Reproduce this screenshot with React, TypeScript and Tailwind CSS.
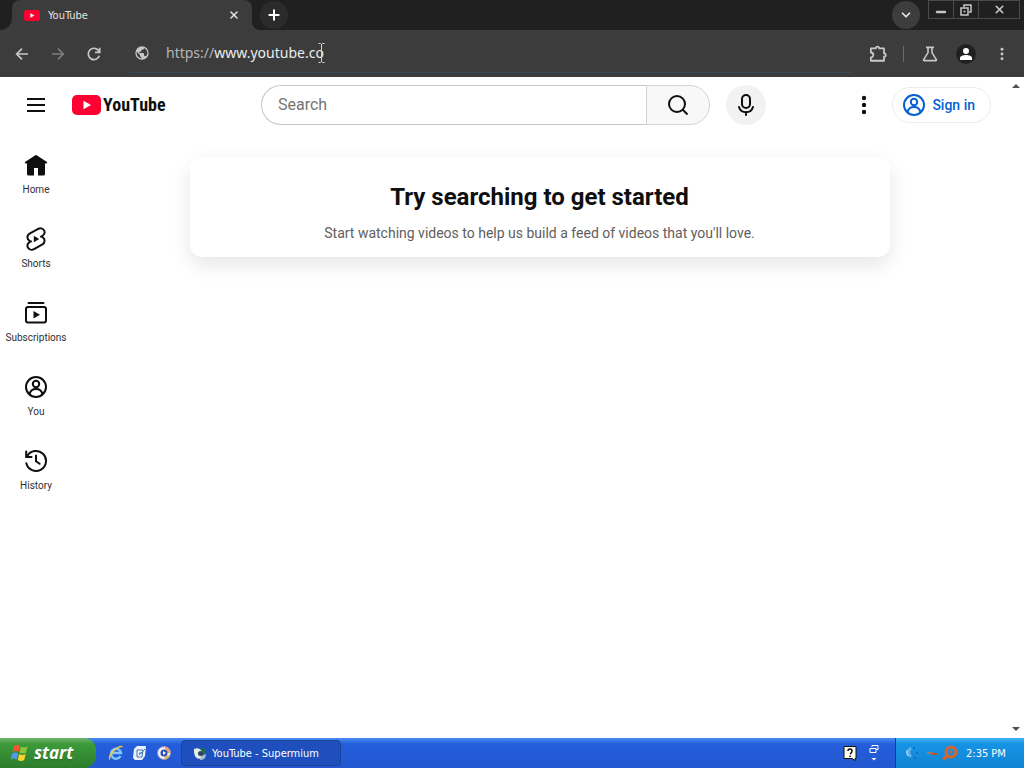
import React, { useState } from 'react'
import { ChevronDown, Minus, Plus, X } from 'lucide-react';

interface IconProps {
  className?: string;
}

interface NavItem {
  label: string;
  icon: (props: IconProps) => React.ReactElement;
}

const HomeIcon = ({ className }: IconProps) => (
  <svg viewBox="0 0 24 24" className={className} fill="currentColor">
    <path d="M11.300 2.200 1.400 8.700a1 1 0 0 0 .5 1.900H3V21a1.500 1.500 0 0 0 1.500 1.500H10V15h4v7.500h5.500A1.500 1.500 0 0 0 21 21V10.600h1.100a1 1 0 0 0 .5-1.900L12.700 2.200a1.300 1.300 0 0 0-1.400 0Z" />
  </svg>
);

const ShortsIcon = ({ className }: IconProps) => (
  <svg viewBox="0 0 24 24" className={className} fill="none" stroke="currentColor" strokeWidth="2" strokeLinejoin="round">
    <path d="M14.200 1.900 6 6.300C2.500 8.200 2.700 12.400 5.600 13.800L7 14.400 6 14.900C3 16.500 2.900 19.300 4.200 21C5.300 22.600 8 23.300 10 22.100L18 17.700C21.500 15.800 21.300 11.600 18.400 10.200L17 9.600 18 9.100C21 7.500 21.100 4.700 19.800 3C18.700 1.400 16.200.800 14.200 1.900Z" />
    <path d="M9.800 8.800v6.400l5.400-3.200Z" fill="currentColor" stroke="none" />
  </svg>
);

const SubscriptionsIcon = ({ className }: IconProps) => (
  <svg viewBox="0 0 24 24" className={className} fill="none" stroke="currentColor" strokeWidth="2">
    <path d="M4.500 2h15" strokeLinecap="round" />
    <rect x="2" y="6" width="20" height="15.500" rx="2" />
    <path d="M9.500 10v7.500l6.500-3.750Z" fill="currentColor" stroke="none" />
  </svg>
);

const AccountIcon = ({ className }: IconProps) => (
  <svg viewBox="0 0 24 24" className={className} fill="none" stroke="currentColor" strokeWidth="2">
    <circle cx="12" cy="12" r="10" />
    <circle cx="12" cy="9" r="3.200" />
    <path d="M5.500 19.200a6.700 6.700 0 0 1 13 0" />
  </svg>
);

const HistoryIcon = ({ className }: IconProps) => (
  <svg viewBox="0 0 24 24" className={className} fill="none" stroke="currentColor" strokeWidth="2" strokeLinecap="round">
    <path d="M2.200 2.500V8H7.500" />
    <path d="M3.200 7.200A10 10 0 1 1 2.300 14.300" />
    <path d="M12 6.500V12.200l3.600 2.600" />
  </svg>
);

const PlayBadge = ({ className }: IconProps) => (
  <svg viewBox="0 0 29 20" className={className}>
    <rect width="29" height="20" rx="5" fill="#ff0033" />
    <path d="M11.500 5.700v8.600L19 10Z" fill="#fff" />
  </svg>
);

const GlobeIcon = ({ className }: IconProps) => (
  <svg viewBox="0 0 24 24" className={className} fill="currentColor">
    <path d="M12 2a10 10 0 1 0 0 20 10 10 0 0 0 0-20Zm-1 17.930C7.050 19.440 4 16.080 4 12c0-.620.080-1.210.210-1.790L9 15v1a2 2 0 0 0 2 2v1.930Zm6.900-2.540A2 2 0 0 0 16 16h-1v-3a1 1 0 0 0-1-1H8v-2h2a1 1 0 0 0 1-1V7h2a2 2 0 0 0 2-2v-.410A8 8 0 0 1 17.900 17.390Z" />
  </svg>
);

const DotsIcon = ({ className }: IconProps) => (
  <svg viewBox="0 0 24 24" className={className} fill="currentColor">
    <circle cx="12" cy="5" r="2.200" />
    <circle cx="12" cy="12" r="2.200" />
    <circle cx="12" cy="19" r="2.200" />
  </svg>
);

const navItems: NavItem[] = [
  { label: 'Home', icon: HomeIcon },
  { label: 'Shorts', icon: ShortsIcon },
  { label: 'Subscriptions', icon: SubscriptionsIcon },
  { label: 'You', icon: AccountIcon },
  { label: 'History', icon: HistoryIcon },
];

const TabStrip = () => (
  <div className="flex h-[30px] bg-[#202020] text-[#e3e3e3]">
    <div className="w-3 bg-[#3c3c3c]">
      <div className="h-full rounded-br-xl bg-[#202020]" />
    </div>
    <div className="flex w-60 items-center rounded-t-lg bg-[#3c3c3c] px-3">
      <PlayBadge className="h-[11px] w-4" />
      <span className="ml-2 flex-1 pt-0.5 font-['DejaVu_Sans_Condensed','DejaVu_Sans',sans-serif] text-[11px]">YouTube</span>
      <button aria-label="Close tab" className="grid h-3 w-3 place-items-center"><X size={12} strokeWidth={3} /></button>
    </div>
    <div className="w-2 bg-[#3c3c3c]">
      <div className="h-full rounded-bl-lg bg-[#202020]" />
    </div>
    <button aria-label="New tab" className="mt-px grid h-7 w-7 place-items-center rounded-full bg-[#2b2b2b] text-white">
      <Plus size={16} strokeWidth={3} />
    </button>
    <div className="flex-1" />
    <button aria-label="Search tabs" className="mt-px grid h-7 w-7 place-items-center rounded-full bg-[#3d3d3d]">
      <ChevronDown size={14} strokeWidth={3} />
    </button>
    <div className="mr-1 ml-2 flex h-[19px] divide-x divide-[#4a4a4a] border border-[#4a4a4a] text-[#c8c8c8]">
      <button aria-label="Minimize" className="grid w-[25px] place-items-center pt-1"><Minus size={14} strokeWidth={4} /></button>
      <button aria-label="Restore" className="grid w-[25px] place-items-center">
        <svg viewBox="0 0 12 12" className="h-3 w-3" fill="none" stroke="currentColor" strokeWidth="1.500">
          <path d="M4 3V1h7v7H9" />
          <rect x="1" y="4" width="7" height="7" />
          <path d="M3.500 7.500h2" />
        </svg>
      </button>
      <button aria-label="Close" className="grid w-10 place-items-center"><X size={13} strokeWidth={3} /></button>
    </div>
  </div>
);

const Toolbar = () => {
  const [url, setUrl] = useState('www.youtube.co');

  return (
    <div className="flex h-[47px] items-center bg-[#3c3c3c] px-3.5 text-[#c7c7c7]">
      <div className="flex gap-5">
        <button aria-label="Back">
          <svg viewBox="0 0 24 24" className="h-4 w-4" fill="none" stroke="currentColor" strokeWidth="2.600"><path d="M21 12H4M12 4l-8 8 8 8" /></svg>
        </button>
        <button aria-label="Forward" className="text-[#7c7c7c]">
          <svg viewBox="0 0 24 24" className="h-4 w-4" fill="none" stroke="currentColor" strokeWidth="2.600"><path d="M3 12h17M12 4l8 8-8 8" /></svg>
        </button>
        <button aria-label="Reload">
          <svg viewBox="0 0 24 24" className="h-4 w-4" fill="none" stroke="currentColor" strokeWidth="2.600"><path d="M20 14.500A8.500 8.500 0 1 1 18.500 6.500L21 9" /><path d="M20.500 2.500V9.500H13.500" /></svg>
        </button>
      </div>
      <div className="ml-7 flex h-[43px] flex-1 items-center self-start border-b border-[#35495c] pt-1 pl-1 font-['Noto_Sans',sans-serif] text-sm">
        <GlobeIcon className="h-4 w-4" />
        <label htmlFor="url" className="ml-4 text-[#b5b5b5]">https://</label>
        <input
          id="url"
          value={url}
          onChange={(e) => setUrl(e.target.value)}
          className="w-28 bg-transparent text-[#ececec] outline-none"
        />
        <svg viewBox="0 0 7 22" className="-ml-2 h-[22px] w-[7px]" fill="none" stroke="#d6d6d6">
          <path d="M.5 1.500h2l1 1 1-1h2M3.500 2v18M.5 20.500h2l1-1 1 1h2" />
        </svg>
      </div>
      <div className="ml-4 flex items-center">
        <button aria-label="Extensions">
          <svg viewBox="0 0 24 24" className="h-[18px] w-[18px]" fill="none" stroke="currentColor" strokeWidth="2.400" strokeLinejoin="round">
            <path d="M2.500 4.500H9a2.300 2.300 0 0 1 4.600 0H20V11a2.300 2.300 0 0 1 0 4.600V21H2.500v-4.500a3 3 0 0 0 0-6.500Z" />
          </svg>
        </button>
        <div className="mx-4 h-4 w-px bg-[#6a6a6a]" />
        <button aria-label="Experiments" className="mx-0.5">
          <svg viewBox="0 0 24 24" className="h-4 w-4" fill="none" stroke="currentColor" strokeWidth="2.400" strokeLinejoin="round">
            <path d="M6 2h12M9 2v8L2.500 20.500q-.5 1.500 1 1.500h17q1.500 0 1-1.500L15 10V2" />
          </svg>
        </button>
        <button aria-label="Profile" className="ml-4 grid h-5 w-5 place-items-center rounded-full bg-[#202020] text-white">
          <svg viewBox="0 0 14 14" className="h-3.5 w-3.5" fill="currentColor"><circle cx="7" cy="4" r="3" /><path d="M1 13v-2c0-2 3-3 6-3s6 1 6 3v2Z" /></svg>
        </button>
        <button aria-label="Menu" className="ml-[18px]"><DotsIcon className="h-4 w-4" /></button>
      </div>
    </div>
  );
};

const Masthead = () => {
  const [query, setQuery] = useState('');

  return (
    <header className="flex h-14 items-center px-4">
      <div className="flex w-[245px] shrink-0 items-center gap-4">
        <button aria-label="Guide" className="grid h-10 w-10 place-items-center">
          <svg viewBox="0 0 24 24" className="h-6 w-6" stroke="currentColor" strokeWidth="2"><path d="M3 6h18M3 12h18M3 18h18" /></svg>
        </button>
        <a href="#" className="flex items-center gap-0.5">
          <PlayBadge className="h-5 w-[29px]" />
          <span className="font-['Roboto_Condensed','Open_Sans_Condensed','Noto_Sans_Condensed',Roboto,sans-serif] text-[18px] leading-6 font-bold">YouTube</span>
        </a>
      </div>
      <form className="flex h-10 flex-1" onSubmit={(e) => e.preventDefault()}>
        <input
          aria-label="Search"
          placeholder="Search"
          value={query}
          onChange={(e) => setQuery(e.target.value)}
          className="min-w-0 flex-1 rounded-l-full border border-r-0 border-[#c6c6c6] px-4 text-base outline-none placeholder:text-[#757575]"
        />
        <button aria-label="Search" className="grid w-16 place-items-center rounded-r-full border border-[#d3d3d3] bg-[#f8f8f8]">
          <svg viewBox="0 0 24 24" className="h-6 w-6" fill="none" stroke="currentColor" strokeWidth="2"><circle cx="11" cy="11" r="8" /><path d="m16.500 16.500 5 5" /></svg>
        </button>
        <button type="button" aria-label="Search with your voice" className="ml-4 grid w-10 place-items-center rounded-full bg-[#f2f2f2]">
          <svg viewBox="0 0 24 24" className="h-6 w-6" fill="none" stroke="currentColor" strokeWidth="2" strokeLinecap="round">
            <rect x="8" y="2" width="8" height="13" rx="4" />
            <path d="M5 14a7.300 7.300 0 0 0 14 0M12 19v3" />
          </svg>
        </button>
      </form>
      <div className="flex w-[225px] shrink-0 items-center justify-end gap-2">
        <button aria-label="Settings" className="grid h-10 w-10 place-items-center"><DotsIcon className="h-6 w-6" /></button>
        <a href="#" className="flex h-9 items-center gap-1.5 rounded-full border border-[#ececec] pr-[15px] pl-[9px] text-sm font-medium text-[#065fd4]">
          <AccountIcon className="h-6 w-6" />
          Sign in
        </a>
      </div>
    </header>
  );
};

const Sidebar = () => (
  <nav className="w-[72px] shrink-0 pt-1">
    {navItems.map(({ label, icon: Icon }) => (
      <a key={label} href="#" className="flex h-[74px] flex-col items-center gap-1.5 pt-4 text-[10px] leading-3.5">
        <Icon className="h-6 w-6" />
        <span className="text-[#303030]">{label}</span>
      </a>
    ))}
  </nav>
);

const Taskbar = () => (
  <footer className="flex h-[30px] items-stretch bg-linear-to-b from-[#4a8df0] via-[#245edb] via-20% to-[#2257d0] font-['DejaVu_Sans_Condensed','DejaVu_Sans',sans-serif] text-[11px] text-white">
    <button className="flex w-24 items-center gap-1 rounded-r-xl bg-linear-to-b from-[#6fb56c] via-[#3c9a3a] via-20% to-[#2c7d2b] pl-2.5">
      <svg viewBox="0 0 20 20" className="h-5 w-5">
        <path d="M4 3q3-2 6 0L8.500 9q-3-2-6 0Z" fill="#f1592a" />
        <path d="M11 3.500q3 2 6.500 0L16 9.500q-3 2-6.500 0Z" fill="#8cc63f" />
        <path d="M2.200 10.500q3-2 6 0L6.700 16.500q-3-2-6 0Z" fill="#4f9bea" />
        <path d="M9.200 11q3 2 6.500 0L14.200 17q-3 2-6.500 0Z" fill="#fdd32f" />
      </svg>
      <span className="font-['Open_Sans',sans-serif] text-[17px] leading-5 font-bold italic text-shadow-sm">start</span>
    </button>
    <div className="flex w-[85px] items-center gap-2 pl-3">
      <button aria-label="Internet Explorer">
        <svg viewBox="0 0 16 16" className="h-4 w-4" fill="none">
          <path d="M12.500 11A5 5 0 1 1 13 8H4" stroke="#7cc8ff" strokeWidth="2.400" />
          <path d="M2 14.500C-1 12 8 1 14.500 1.500" stroke="#f3c545" strokeWidth="1.500" />
        </svg>
      </button>
      <button aria-label="Show Desktop">
        <svg viewBox="0 0 16 16" className="h-4 w-4">
          <path d="M2 4 5 1h9l-1 10-3 4H3l-2-2Z" fill="#e9f1fb" />
          <path d="M5 5h6l-1 7H5ZM7 8h4M7 10l6-6" fill="none" stroke="#4576ad" />
        </svg>
      </button>
      <button aria-label="Media Player">
        <svg viewBox="0 0 16 16" className="h-4 w-4">
          <circle cx="8" cy="8" r="6.500" fill="#f1eff6" stroke="#8794c4" />
          <path d="M8 1.500A6.500 6.500 0 0 1 14.500 8h-3Z" fill="#f0a36b" />
          <path d="M14 10a6.500 6.500 0 0 1-6 4.500l1-3Z" fill="#e7b04b" />
          <circle cx="8" cy="8" r="3.500" fill="#294fb5" />
          <path d="M7 6v4l3-2Z" fill="#fff" />
        </svg>
      </button>
    </div>
    <button className="my-0.5 flex w-40 items-center gap-1 rounded-sm border border-[#1a43a0] bg-[#1e4fbd] pt-0.5 pl-2.5">
      <svg viewBox="0 0 16 16" className="h-4 w-4">
        <path d="M2 3q5-2 8 2l-1 8Q1 13 2 3Z" fill="#e5edec" />
        <path d="M8 2q7 0 6 7l-4-3Z" fill="#25713d" />
        <path d="M14 8q0 6-6 6l1-4Z" fill="#a9bfc9" />
        <circle cx="8.500" cy="7.500" r="2.500" fill="#31475c" />
      </svg>
      YouTube - Supermium
    </button>
    <div className="flex-1" />
    <div className="flex items-center gap-3 pr-4">
      <svg viewBox="0 0 14 16" className="h-4 w-3.5">
        <path d="M1 1.500h12v12h-1v2l-3-2H1Z" fill="#fffff0" stroke="#111" />
        <path d="M5 6q0-2 2-2t2 2-2 3M7 10.500v1.500" fill="none" stroke="#111" strokeWidth="1.500" />
      </svg>
      <svg viewBox="0 0 10 20" className="h-5 w-2.5" fill="none" stroke="#fff">
        <path d="M3 4V2.500h6v4H7M1 5.500h6v4H1Z" />
        <path d="M2.500 15h5L5 17.500Z" fill="#fff" stroke="none" />
      </svg>
    </div>
    <div className="flex w-[129px] items-center border-l border-[#0c3f9c] bg-linear-to-b from-[#3fb4f5] via-[#1693e6] via-20% to-[#1183d2] pl-2">
      <svg viewBox="0 0 18 16" className="h-4 w-[18px]" fill="none">
        <path d="M7 3Q2 7 7 12" stroke="#63b3e6" strokeWidth="3" />
        <path d="M3 5q-1 3 1 6" stroke="#d3ecfb" />
        <path d="M10 2v2M13 7v2M11 12v2" stroke="#1464ad" strokeWidth="1.500" />
      </svg>
      <svg viewBox="0 0 12 16" className="ml-1 h-4 w-3" fill="none" strokeWidth="2"><path d="M1 8h6" stroke="#9a7771" /><path d="M6 9h5" stroke="#b6512b" /></svg>
      <svg viewBox="0 0 16 16" className="ml-1 h-4 w-4" fill="none" stroke="#d9642a">
        <circle cx="9" cy="7" r="5" strokeWidth="3" />
        <circle cx="9" cy="7" r="1" fill="#d9642a" />
        <path d="m5 11-4 3.500" strokeWidth="3" />
      </svg>
      <span className="ml-2 pt-0.5">2:35 PM</span>
    </div>
  </footer>
);

const App = () => {
  return (
    <div className="flex h-screen flex-col bg-white font-[Roboto,sans-serif] text-[#0f0f0f]">
      <TabStrip />
      <Toolbar />
      <div className="flex min-h-0 flex-1">
        <div className="flex min-w-0 flex-1 flex-col">
          <Masthead />
          <div className="flex flex-1">
            <Sidebar />
            <main className="flex flex-1 items-start justify-center pt-6">
              <section className="w-full max-w-[700px] rounded-xl pt-6 pb-3.5 text-center shadow-[0_8px_20px_rgba(0,0,0,0.1)]">
                <h1 className="text-2xl leading-8 font-bold">Try searching to get started</h1>
                <p className="mt-2.5 text-sm leading-5 text-[#606060]">
                  Start watching videos to help us build a feed of videos that you'll love.
                </p>
              </section>
            </main>
          </div>
        </div>
        <div className="flex w-[17px] flex-col items-center justify-between py-1.5 text-[#505050]">
          <svg viewBox="0 0 8 6" className="h-1.5 w-2" fill="currentColor"><path d="M0 5h8L4 1Z" /></svg>
          <svg viewBox="0 0 8 6" className="h-1.5 w-2" fill="currentColor"><path d="M0 1h8L4 5Z" /></svg>
        </div>
      </div>
      <Taskbar />
    </div>
  )
}

export default App
